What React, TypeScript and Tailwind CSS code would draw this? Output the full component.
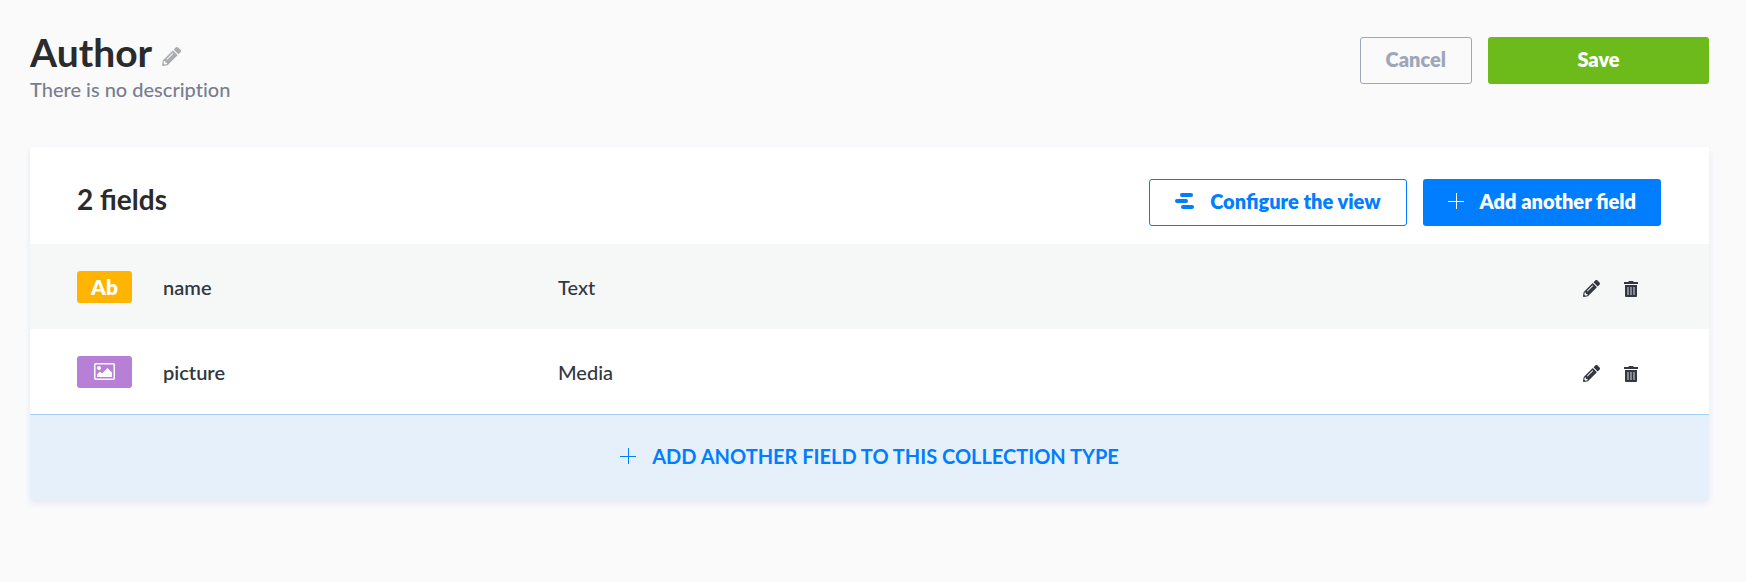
import React from 'react';
import { FaPencilAlt } from 'react-icons/fa';

type Kind = 'text' | 'media';

interface Field {
  name: string;
  label: string;
  kind: Kind;
}

const fields: Field[] = [
  { name: 'name', label: 'Text', kind: 'text' },
  { name: 'picture', label: 'Media', kind: 'media' },
];

const PlusIcon = () => (
  <svg viewBox="0 0 16 16" className="w-4 h-4 shrink-0" stroke="currentColor" strokeWidth="1" fill="none" aria-hidden="true">
    <path d="M8.5 0v16M0 8.5h16" />
  </svg>
);

const LayoutIcon = () => (
  <svg viewBox="0 0 19 16" className="w-[19px] h-4 shrink-0" fill="currentColor" aria-hidden="true">
    <rect x="5" y="0" width="13" height="4" rx="2" />
    <rect x="0" y="6" width="13" height="4" rx="2" />
    <rect x="6" y="12" width="13" height="4" rx="2" />
  </svg>
);

const TrashIcon = () => (
  <svg viewBox="0 0 14 16" className="w-[14px] h-4" fill="currentColor" aria-hidden="true">
    <path d="M0 1h4.2l.8-1h4l.8 1H14v2H0z" />
    <path d="M1 4h12v11a1 1 0 0 1-1 1H2a1 1 0 0 1-1-1z" />
    <path d="M4 6v8M7 6v8M10 6v8" stroke="#9a9ea6" strokeWidth="1.600" />
  </svg>
);

const PictureIcon = () => (
  <svg viewBox="0 0 21 17" className="w-[21px] h-[17px]" fill="none" aria-hidden="true">
    <rect x=".75" y=".75" width="19.500" height="15.500" rx="1" stroke="currentColor" strokeWidth="1.500" />
    <circle cx="5" cy="5" r="2" fill="currentColor" />
    <path d="M3 14v-2.500l3-3 2 2 5.500-5.500 4.500 4.500V14z" fill="currentColor" />
  </svg>
);

const FieldBadge = ({ kind }: { kind: Kind }) => {
  if (kind === 'text') {
    return (
      <span className="flex w-[55px] h-8 items-center justify-center rounded-[3px] bg-[#ffb500] text-[21px] font-extrabold text-white">
        Ab
      </span>
    );
  }

  return (
    <span className="flex w-[55px] h-8 items-center justify-center rounded-[3px] bg-[#b780d6] text-white">
      <PictureIcon />
    </span>
  );
};

const App = () => {
  return (
    <main className="min-h-screen bg-[#fafafb] px-[30px] pt-9 pr-[37px] pb-20 font-['Lato',sans-serif] text-xl text-[#333740]">
      <header className="flex items-start justify-between">
        <div>
          <div className="flex items-center gap-2.5">
            <h1 className="text-[39px] leading-8 font-bold text-[#292b2c]">Author</h1>
            <button type="button" aria-label="Edit name" className="pt-2 text-[#a9abae]">
              <FaPencilAlt size={19} />
            </button>
          </div>
          <p className="mt-2 leading-[26px] font-medium text-[#787e8f] [font-variant-ligatures:no-common-ligatures]">
            There is no description
          </p>
        </div>

        <div className="mt-px flex gap-4">
          <button type="button" className="h-[47px] px-[25px] pb-1 rounded-[3px] border border-[#9ea7b8] font-extrabold text-[#9ea7b8]">
            Cancel
          </button>
          <button type="button" className="h-[47px] w-[221px] pb-1 rounded-[3px] bg-[#6dbb1a] font-extrabold text-white">
            Save
          </button>
        </div>
      </header>

      <section className="mt-[45px] overflow-hidden rounded-[3px] bg-white shadow-[0_3px_6px_#e3e9f3]">
        <div className="flex h-[97px] items-start justify-between pl-[47px] pr-12 pt-8">
          <h2 className="text-[28px] leading-10 font-bold text-[#292b2c]">2 fields</h2>
          <div className="flex gap-4">
            <button type="button" className="flex h-[47px] items-center gap-4 rounded-[3px] border border-[#007eff] px-[25px] pb-1 font-extrabold text-[#007eff]">
              <LayoutIcon />
              Configure the view
            </button>
            <button type="button" className="flex h-[47px] items-center gap-4 rounded-[3px] bg-[#007eff] px-[25px] pb-1 font-extrabold text-white">
              <PlusIcon />
              Add another field
            </button>
          </div>
        </div>

        <table className="w-full table-fixed">
          <tbody>
            {fields.map(field => (
              <tr key={field.name} className="h-[85px] odd:bg-[#f6f8f8]">
                <td className="w-[133px] pl-[47px]">
                  <FieldBadge kind={field.kind} />
                </td>
                <td className="w-[395px] font-semibold">{field.name}</td>
                <td className="font-medium">{field.label}</td>
                <td className="w-[200px] pr-[71px]">
                  <div className="flex justify-end gap-6 pt-1">
                    <button type="button" aria-label={`Edit ${field.name}`}>
                      <FaPencilAlt size={17} />
                    </button>
                    <button type="button" aria-label={`Delete ${field.name}`}>
                      <TrashIcon />
                    </button>
                  </div>
                </td>
              </tr>
            ))}
          </tbody>
        </table>

        <button
          type="button"
          className="flex h-[86px] w-full items-center justify-center gap-4 border-t border-[#a5d1fb] bg-[#e6f0fb] pb-1 font-bold text-[#007eff] uppercase"
        >
          <PlusIcon />
          Add another field to this collection type
        </button>
      </section>
    </main>
  );
};

export default App;
